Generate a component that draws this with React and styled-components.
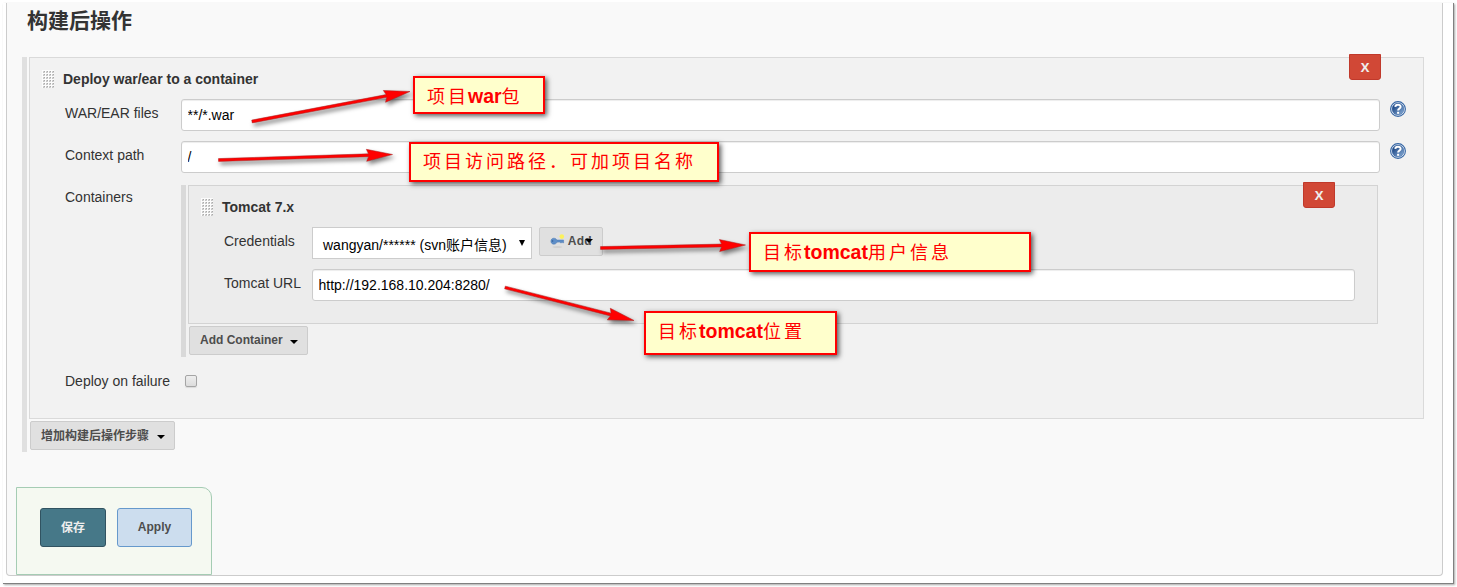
import React from "react";
import styled, { createGlobalStyle, css } from "styled-components";

const GlobalStyle = createGlobalStyle`
  *, *::before, *::after { box-sizing: border-box; }
  body {
    margin: 0;
    background: #fff;
    color: #333;
    font: 14px/20px "Liberation Sans", "Noto Sans CJK SC", sans-serif;
    overflow: hidden;
  }
  button, input { font-family: inherit; }
`;

const Page = styled.div`
  position: relative;
  width: 1457px;
  height: 587px;
  padding: 3px;
`;

const Sheet = styled.div`
  width: 1451px;
  height: 581px;
  padding: 0 11px 8px 3px;
  background: #fff;
  border-right: 1px solid #808080;
  border-bottom: 1px solid #808080;
  box-shadow: 1px 1px 2px rgba(0, 0, 0, 0.35);
`;

const Panel = styled.main`
  display: flex;
  flex-direction: column;
  align-items: flex-start;
  height: 573px;
  width: 1437px;
  padding: 0 0 0 9px;
  background: #f9f9f9;
  border: 1px solid #ccc;
  border-top: 0;
  border-radius: 0 0 4px 4px;
`;

const Title = styled.h1`
  margin: 0 0 0 11px;
  height: 54px;
  font-size: 21px;
  line-height: 35px;
  font-weight: 700;
`;

const StepList = styled.section`
  margin-left: ${(p) => (p.$nested ? "0" : "6px")};
  padding-left: 2px;
  border-left: 5px solid ${(p) => (p.$nested ? "#d9d9d9" : "#e0e0e0")};
  width: ${(p) => (p.$nested ? "1197px" : "1402px")};
  height: ${(p) => (p.$nested ? "172px" : "395px")};
`;

const Step = styled.div`
  width: 100%;
  height: ${(p) => (p.$nested ? "139px" : "362px")};
  background: ${(p) => (p.$nested ? "#ececec" : "#f2f2f2")};
  border: 1px solid ${(p) => (p.$nested ? "#d3d3d3" : "#dadada")};
`;

const StepHeader = styled.header`
  display: flex;
  height: 41px;
  padding: 0 42px 0 12px;
`;

const GripSvg = styled.svg`
  width: 12px;
  height: 18px;
  margin: 12px 9px 0 0;
  shape-rendering: crispEdges;
`;

const StepName = styled.strong`
  flex: 1;
  padding-top: 11px;
  line-height: 20px;
`;

const RemoveButton = styled.button`
  width: 32px;
  height: 26px;
  margin-top: -4px;
  padding: 0;
  border: 1px solid #c0392b;
  border-radius: 0 0 3px 3px;
  background: #d14836;
  color: #eee;
  font-family: "Open Sans", sans-serif;
  font-size: 13px;
  font-weight: 700;
  line-height: 22px;
`;

const Field = styled.div`
  display: flex;
  align-items: flex-start;
  height: ${(p) => p.$height || 42}px;
  padding-left: 35px;
`;

const Label = styled.label`
  width: ${(p) => p.$width || 116}px;
  padding-top: 4px;
  line-height: 20px;
  white-space: nowrap;
`;

const TextInput = styled.input`
  width: ${(p) => p.$width || 1199}px;
  height: 32px;
  padding: 0 6px 1px 5.5px;
  border: 1px solid #ccc;
  border-radius: 3px;
  background: #fff;
  box-shadow: inset 0 1px 1px rgba(0, 0, 0, 0.075);
  color: #000;
  font-size: 14px;
  outline: none;
`;

const HelpSvg = styled.svg`
  width: 16px;
  height: 16px;
  margin: 2px 0 0 10px;
`;

const Nested = styled.div`
  padding-top: 2px;
`;

const Select = styled.div`
  display: flex;
  align-items: center;
  justify-content: space-between;
  width: 220px;
  height: 32px;
  padding: 3px 6px 0 10px;
  border: 1px solid #ccc;
  background: #fff;
  color: #000;
  white-space: nowrap;
`;

const SelectArrow = styled.svg`
  width: 6px;
  height: 6px;
  margin-top: -4px;
`;

const MenuButton = styled.button`
  display: flex;
  align-items: center;
  height: 29px;
  width: ${(p) => p.$width}px;
  margin: ${(p) => p.$margin || "2px 0 0 1px"};
  padding: 0 9px 2px 10px;
  border: 1px solid #ccc;
  border-radius: 2px;
  background: #e0e0e0;
  color: #4d4d4d;
  font-size: 12px;
  font-weight: 700;
  white-space: nowrap;
`;

const ButtonText = styled.span`
  letter-spacing: ${(p) => p.$spacing || "0"};
`;

const Caret = styled.span`
  width: 0;
  height: 0;
  margin: 4px 0 0 auto;
  border: 4px solid transparent;
  border-top-color: #000;
  border-bottom: 0;
  ${(p) =>
    p.$overlap &&
    css`
      margin: 1px 0 0 -7px;
    `}
`;

const KeySvg = styled.svg`
  width: 16px;
  height: 16px;
  margin: 1px 3px 0 0;
`;

const Checkbox = styled.input`
  appearance: none;
  width: 12px;
  height: 12px;
  margin: 8px 0 0 4px;
  border: 1px solid #a5a5a5;
  border-radius: 2px;
  background: linear-gradient(#eee, #dcdcdc);
  box-shadow: 0 1px 1px rgba(0, 0, 0, 0.1);
`;

const Footer = styled.footer`
  display: flex;
  gap: 11px;
  width: 196px;
  height: 88px;
  margin-top: auto;
  padding: 20px 0 0 23px;
  background: #f5f9f1;
  border: 1px solid #a5ccb4;
  border-radius: 0 10px 0 0;
`;

const ActionButton = styled.button`
  width: ${(p) => (p.$primary ? 66 : 75)}px;
  height: 39px;
  padding: 0 0 2px;
  border: 1px solid ${(p) => (p.$primary ? "#315361" : "#6699cc")};
  border-radius: 3px;
  background: ${(p) => (p.$primary ? "#467888" : "#ccddee")};
  color: ${(p) => (p.$primary ? "#eee" : "#4d4d4d")};
  font-size: 12px;
  font-weight: 700;
`;

const Note = styled.div`
  position: absolute;
  left: ${(p) => p.$x}px;
  top: ${(p) => p.$y}px;
  width: ${(p) => p.$w}px;
  height: ${(p) => p.$h}px;
  padding: 3px 0 0 12px;
  border: 2px solid #f00;
  background: #ffffcc;
  box-shadow: 2px 2px 5px rgba(0, 0, 0, 0.65);
  color: #f00;
  font-size: 18px;
  line-height: 30px;
  letter-spacing: 3px;
  white-space: nowrap;

  b {
    margin-left: -1px;
    font-size: 19.5px;
    letter-spacing: 0;
  }
`;

const Arrows = styled.svg`
  position: absolute;
  left: 0;
  top: 0;
  pointer-events: none;
  filter: drop-shadow(2px 3px 2px rgba(0, 0, 0, 0.5));
`;

const ARROWS = [
  [252, 121.5, 410, 91.5],
  [218.5, 160, 392.5, 154.5],
  [600.5, 248, 745.5, 245],
  [505, 287.5, 634, 320.5],
];

function Arrow({ points: [x1, y1, x2, y2] }) {
  const length = Math.hypot(x2 - x1, y2 - y1);
  const angle = (Math.atan2(y2 - y1, x2 - x1) * 180) / Math.PI;
  return (
    <g transform={`translate(${x1} ${y1}) rotate(${angle})`} fill="#f00" stroke="#a22" strokeWidth="0.5">
      <path d={`M0-1.4H${length - 24}L${length - 26}-6L${length} 0L${length - 26} 6L${length - 24} 1.4H0Z`} />
    </g>
  );
}

const GRIP_ROWS = [0, 1, 2, 3, 4, 5];
const GRIP_COLS = [0, 1, 2, 3];

function Grip() {
  return (
    <GripSvg viewBox="0 0 12 18">
      <rect width="12" height="18" fill="#fcfcfc" />
      {GRIP_ROWS.map((r) =>
        GRIP_COLS.map((c) => (
          <g key={`${r}-${c}`} transform={`translate(${c * 3 + 1} ${r * 3 + 1})`}>
            <path d="M0 0H2V2H0Z" fill="#d2d2d2" />
            <path d="M1 0H2V1H1Z" fill="#aaa" />
            <path d="M0 1H1V2H0Z" fill="#c4c4c4" />
          </g>
        ))
      )}
    </GripSvg>
  );
}

function HelpIcon() {
  return (
    <HelpSvg viewBox="0 0 16 16">
      <defs>
        <linearGradient id="helpFill" x1="0" y1="0" x2="1" y2="1">
          <stop offset="0.2" stopColor="#204a87" />
          <stop offset="1" stopColor="#8fb3dc" />
        </linearGradient>
      </defs>
      <circle cx="8" cy="8" r="7.4" fill="#fff" stroke="#3465a4" strokeWidth="1.1" />
      <circle cx="8" cy="8" r="6" fill="url(#helpFill)" stroke="#3465a4" strokeWidth="0.5" />
      <path d="M5.3 5.9C5.4 2.9 10.9 3 10.6 6C10.4 7.6 8.1 7.5 8.1 9.6" fill="none" stroke="#fff" strokeWidth="2" />
      <rect x="7.1" y="10.8" width="2" height="2" fill="#fff" />
    </HelpSvg>
  );
}

function KeyIcon() {
  return (
    <KeySvg viewBox="0 0 16 16">
      <ellipse cx="8" cy="14.6" rx="5.5" ry="0.8" fill="#ccc" />
      <circle cx="12.8" cy="3.2" r="2.5" fill="#fcf15c" />
      <path
        d="M4 5C6 5 7 6 7.5 7H14.7V10H13.7V9.2H12.5V10H11.3V9.2H7.8C7 10.6 5.9 11.4 4.2 11.4C2.2 11.4 1 10 1 8.2C1 6.4 2.3 5 4 5Z"
        fill="#5f8fc8"
        stroke="#4a7ab5"
        strokeWidth="0.6"
      />
      <ellipse cx="2.9" cy="8.1" rx="0.7" ry="1.1" fill="#3a669e" />
    </KeySvg>
  );
}

export default function App() {
  return (
    <>
      <GlobalStyle />
      <Page>
        <Sheet>
          <Panel>
            <Title>构建后操作</Title>
            <StepList>
              <Step>
                <StepHeader>
                  <Grip />
                  <StepName>Deploy war/ear to a container</StepName>
                  <RemoveButton>X</RemoveButton>
                </StepHeader>
                <Field>
                  <Label>WAR/EAR files</Label>
                  <TextInput defaultValue="**/*.war" />
                  <HelpIcon />
                </Field>
                <Field>
                  <Label>Context path</Label>
                  <TextInput defaultValue="/" />
                  <HelpIcon />
                </Field>
                <Field $height={184}>
                  <Label>Containers</Label>
                  <Nested>
                    <StepList $nested>
                      <Step $nested>
                        <StepHeader>
                          <Grip />
                          <StepName>Tomcat 7.x</StepName>
                          <RemoveButton>X</RemoveButton>
                        </StepHeader>
                        <Field>
                          <Label $width={88}>Credentials</Label>
                          <Select>
                            wangyan/****** (svn账户信息)
                            <SelectArrow viewBox="0 0 6 6">
                              <path d="M0 0H6L3 6Z" />
                            </SelectArrow>
                          </Select>
                          <MenuButton $width={64} $margin="0 0 0 7px">
                            <KeyIcon />
                            <ButtonText $spacing="0.3px">Add</ButtonText>
                            <Caret $overlap />
                          </MenuButton>
                        </Field>
                        <Field>
                          <Label $width={88}>Tomcat URL</Label>
                          <TextInput $width={1043} defaultValue="http://192.168.10.204:8280/" />
                        </Field>
                      </Step>
                      <MenuButton $width={119}>
                        <ButtonText>Add Container</ButtonText>
                        <Caret />
                      </MenuButton>
                    </StepList>
                  </Nested>
                </Field>
                <Field>
                  <Label>Deploy on failure</Label>
                  <Checkbox type="checkbox" />
                </Field>
              </Step>
              <MenuButton $width={145}>
                <ButtonText>增加构建后操作步骤</ButtonText>
                <Caret />
              </MenuButton>
            </StepList>
            <Footer>
              <ActionButton $primary>保存</ActionButton>
              <ActionButton>Apply</ActionButton>
            </Footer>
          </Panel>
        </Sheet>
        <Arrows width="1457" height="587">
          {ARROWS.map((points) => (
            <Arrow key={points.join()} points={points} />
          ))}
        </Arrows>
        <Note $x={413} $y={76} $w={132} $h={38}>项目<b>war</b>包</Note>
        <Note $x={409} $y={142} $w={310} $h={40}>项目访问路径．可加项目名称</Note>
        <Note $x={749} $y={232} $w={282} $h={40}>目标<b>tomcat</b>用户信息</Note>
        <Note $x={644} $y={311} $w={193} $h={44}>目标<b>tomcat</b>位置</Note>
      </Page>
    </>
  );
}
